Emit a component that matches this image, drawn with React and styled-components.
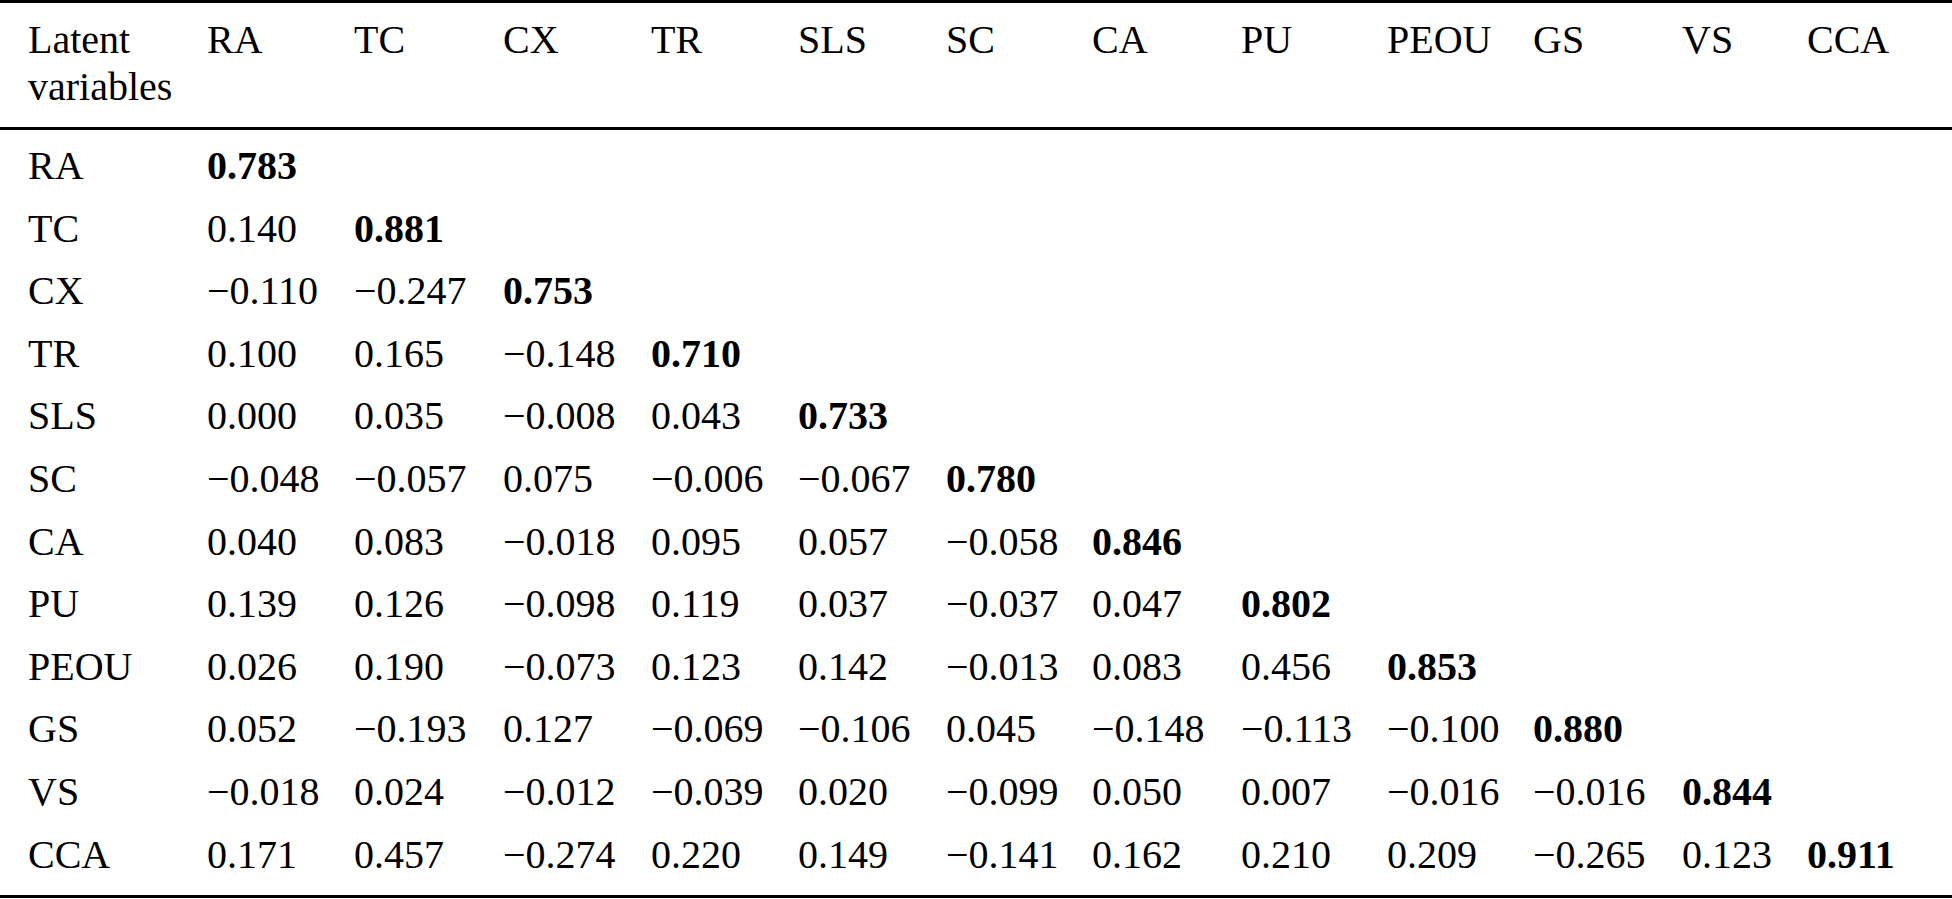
import React from 'react';
import styled, { createGlobalStyle } from 'styled-components';

const GlobalStyle = createGlobalStyle`
  html, body {
    margin: 0;
    padding: 0;
    background: #fff;
  }
  body {
    font-family: "Liberation Serif", "Times New Roman", serif;
    color: #000;
  }
`;

const Table = styled.table`
  width: 1952px;
  table-layout: fixed;
  border-collapse: separate;
  border-spacing: 0;
  border-top: 3px solid #000;
  border-bottom: 3px solid #000;
  font-size: 40px;
`;

const Col = styled.col`
  width: ${props => props.$w}px;
`;

const HeadCell = styled.th`
  padding: 13px 0 17px ${props => (props.$first ? '28px' : '0')};
  line-height: 47px;
  font-weight: 400;
  text-align: left;
  vertical-align: top;
  border-bottom: 3px solid #000;
  white-space: ${props => (props.$first ? 'normal' : 'nowrap')};
`;

const Body = styled.tbody`
  tr:first-child td {
    padding-top: 5px;
  }
  tr:last-child td {
    padding-bottom: 9px;
  }
`;

const Cell = styled.td`
  padding: 0 0 0 ${props => (props.$first ? '28px' : '0')};
  line-height: 62.6px;
  font-weight: ${props => (props.$bold ? 700 : 400)};
  text-align: left;
  white-space: nowrap;
`;

// column widths measured off the printed table
const widths = [207, 147, 149, 148, 147, 148, 146, 149, 146, 146, 149, 125, 145];

const vars = ['RA', 'TC', 'CX', 'TR', 'SLS', 'SC', 'CA', 'PU', 'PEOU', 'GS', 'VS', 'CCA'];

const rows = [
  ['0.783'],
  ['0.140', '0.881'],
  ['\u22120.110', '\u22120.247', '0.753'],
  ['0.100', '0.165', '\u22120.148', '0.710'],
  ['0.000', '0.035', '\u22120.008', '0.043', '0.733'],
  ['\u22120.048', '\u22120.057', '0.075', '\u22120.006', '\u22120.067', '0.780'],
  ['0.040', '0.083', '\u22120.018', '0.095', '0.057', '\u22120.058', '0.846'],
  ['0.139', '0.126', '\u22120.098', '0.119', '0.037', '\u22120.037', '0.047', '0.802'],
  ['0.026', '0.190', '\u22120.073', '0.123', '0.142', '\u22120.013', '0.083', '0.456', '0.853'],
  ['0.052', '\u22120.193', '0.127', '\u22120.069', '\u22120.106', '0.045', '\u22120.148', '\u22120.113', '\u22120.100', '0.880'],
  ['\u22120.018', '0.024', '\u22120.012', '\u22120.039', '0.020', '\u22120.099', '0.050', '0.007', '\u22120.016', '\u22120.016', '0.844'],
  ['0.171', '0.457', '\u22120.274', '0.220', '0.149', '\u22120.141', '0.162', '0.210', '0.209', '\u22120.265', '0.123', '0.911'],
];

const App = () => {
  return (
    <>
      <GlobalStyle />
      <Table>
        <colgroup>
          {widths.map((w, i) => (
            <Col key={i} $w={w} />
          ))}
        </colgroup>
        <thead>
          <tr>
            <HeadCell $first>Latent variables</HeadCell>
            {vars.map(v => (
              <HeadCell key={v}>{v}</HeadCell>
            ))}
            <HeadCell />
          </tr>
        </thead>
        <Body>
          {rows.map((values, r) => (
            <tr key={vars[r]}>
              <Cell $first>{vars[r]}</Cell>
              {vars.map((v, c) => (
                <Cell key={v} $bold={c === r}>
                  {values[c] || ''}
                </Cell>
              ))}
              <Cell />
            </tr>
          ))}
        </Body>
      </Table>
    </>
  );
};

export default App;
